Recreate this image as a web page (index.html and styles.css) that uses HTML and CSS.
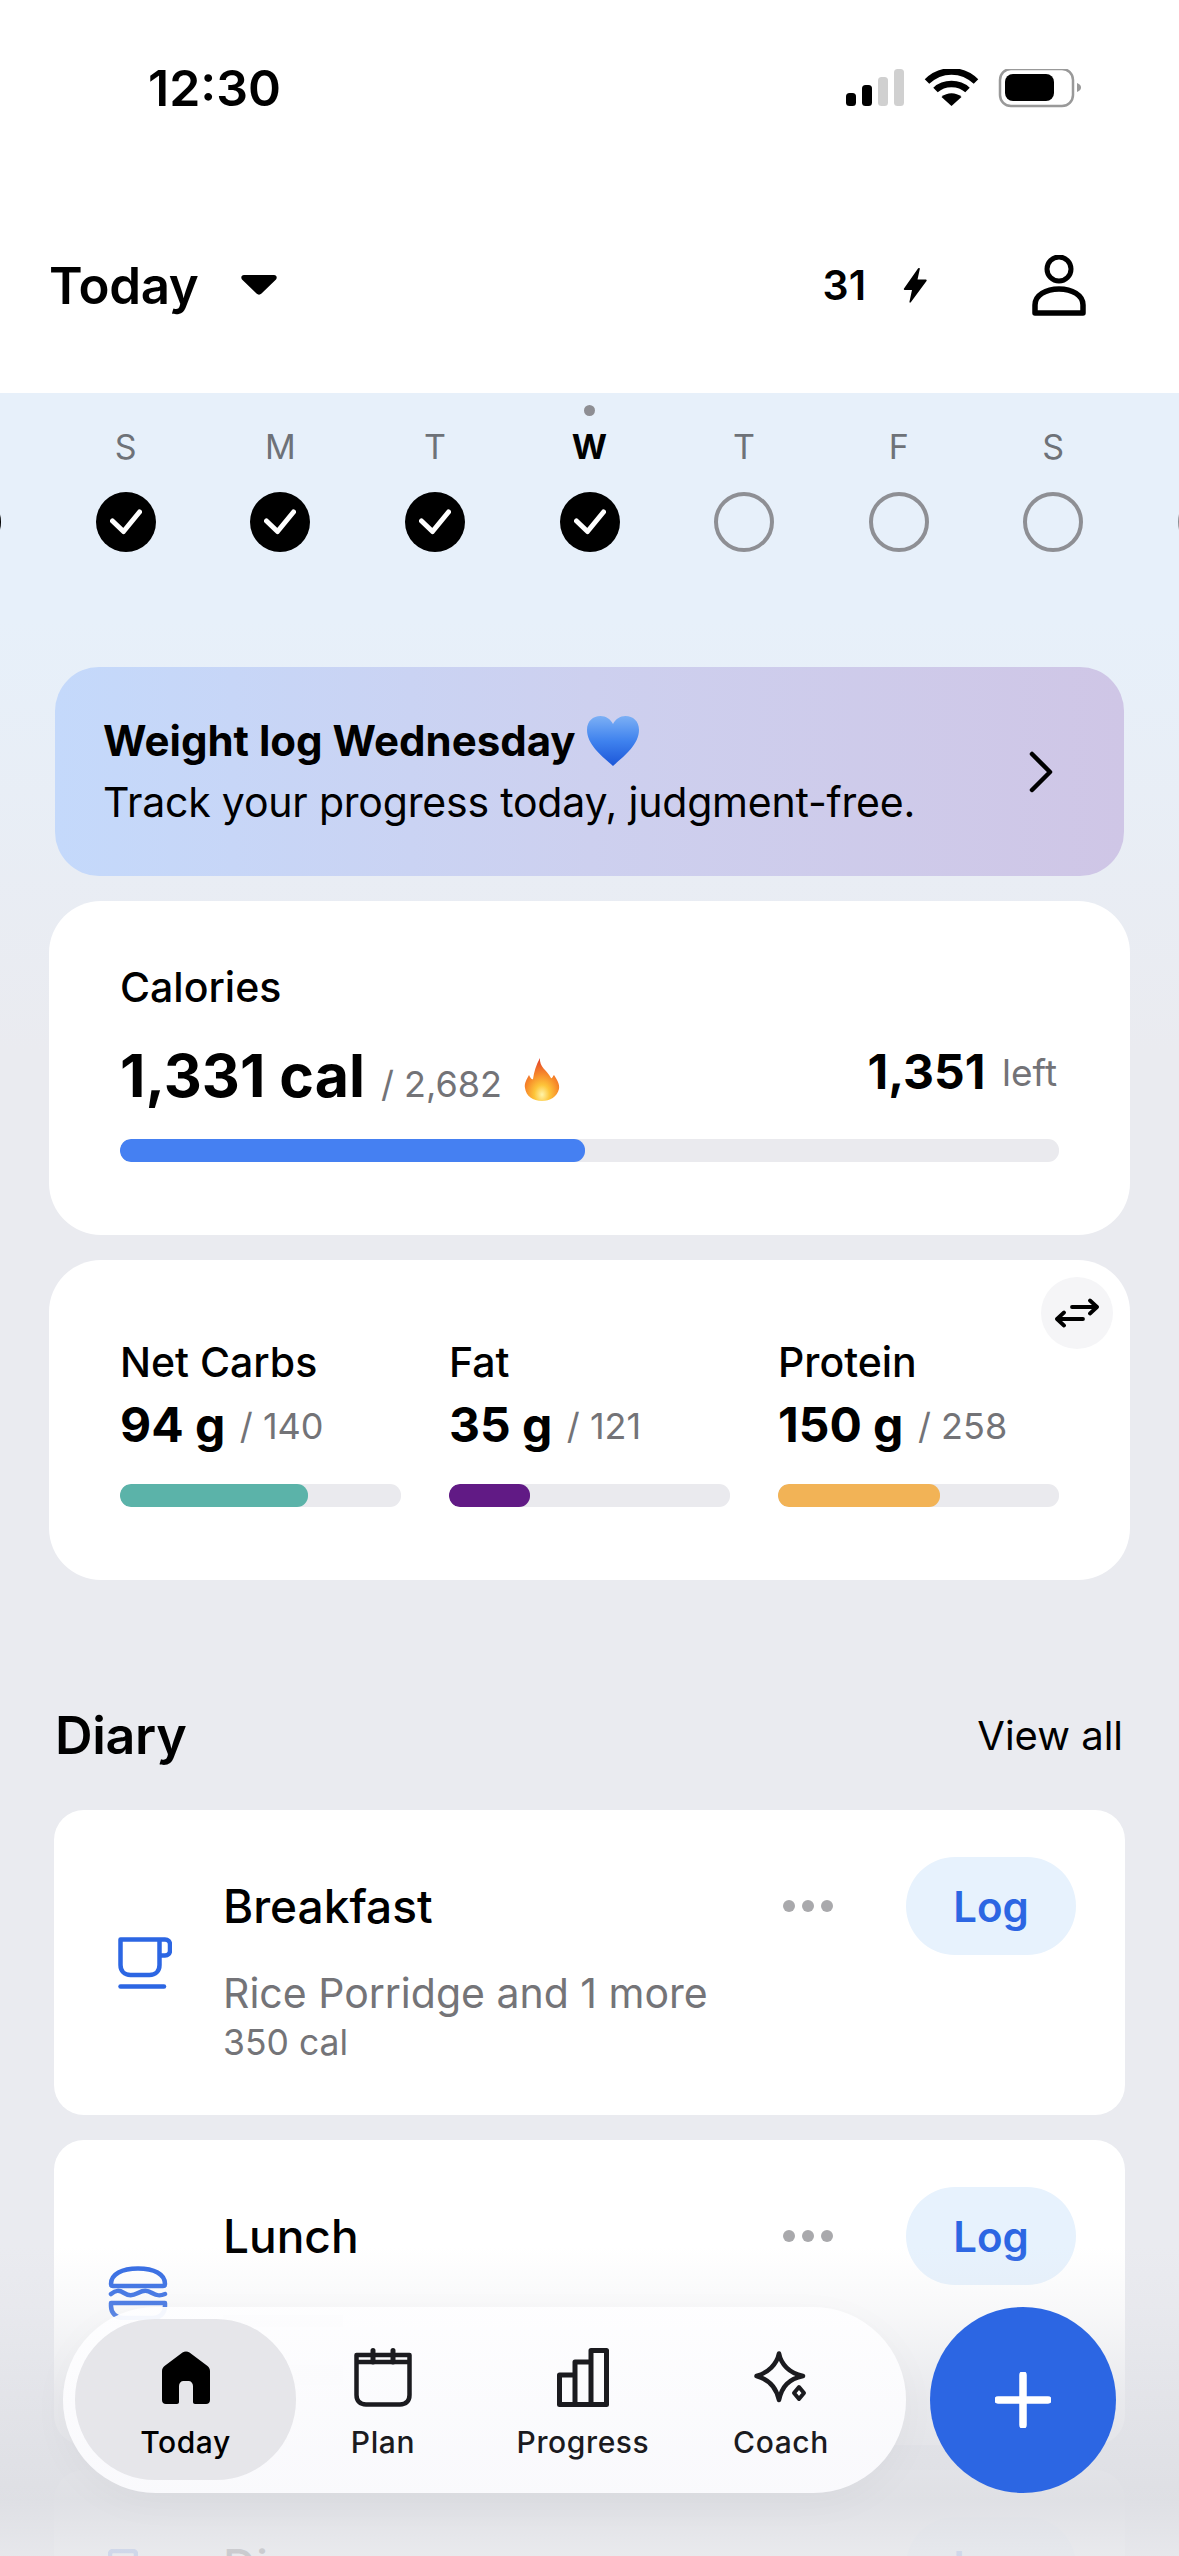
FILE: index.html
```html
<!DOCTYPE html>
<html lang="en">

<head>
    <meta charset="UTF-8">
    <title>Today</title>
    <link rel="stylesheet" href="styles.css">
</head>

<body>
    <div class="phone">
        <div class="top">
            <div class="status-bar">
                <span class="time">12:30</span>
                <svg class="status-icons" width="235" height="40" viewBox="0 0 235 40">
                    <rect x="0" y="24" width="10" height="13" rx="3.5" fill="#000" />
                    <rect x="16" y="16" width="10" height="21" rx="3.5" fill="#000" />
                    <rect x="32" y="8" width="10" height="29" rx="3.5" fill="#d0d0d0" />
                    <rect x="48" y="0" width="10" height="37" rx="3.5" fill="#d0d0d0" />
                    <path d="M81 12.500C95 -1 116 -1 130 12.500" fill="none" stroke="#000" stroke-width="6.500" />
                    <path d="M89.500 21C98 13 113 13 121.500 21" fill="none" stroke="#000" stroke-width="6.500" />
                    <path d="M105.500 37L95.500 28C101 23 110 23 115.500 28Z" fill="#000" />
                    <rect x="154" y="0" width="73" height="37" rx="11" fill="none" stroke="#999" stroke-width="2.500" />
                    <rect x="159" y="5" width="49" height="27" rx="8" fill="#000" />
                    <path d="M231 14C234 15 235 17 235 18.500C235 20 234 22 231 23Z" fill="#999" />
                </svg>
            </div>
            <div class="top-bar">
                <div class="date-picker">
                    <span class="date-label">Today</span>
                    <svg width="36" height="20" viewBox="0 0 36 20">
                        <path d="M3 0H33C35.500 0 36.500 2.500 35 4.500L20.500 18.500C19 20 17 20 15.500 18.500L1 4.500C-0.500 2.500 0.500 0 3 0Z" fill="#000" />
                    </svg>
                </div>
                <div class="streak">
                    <span class="streak-count">31</span>
                    <svg width="24" height="35" viewBox="0 0 24 35">
                        <path d="M15 0.500L1 20.500C0.500 21.500 1 22 2 22H9L6.500 33.500C6.300 35 7.300 35 8 34L23.500 13C24 12 23.500 11.500 22.500 11.500H14.500L16.800 1C17 0 15.800 -0.500 15 0.500Z" fill="#000" />
                    </svg>
                </div>
                <svg class="profile" width="54" height="61" viewBox="0 0 54 61">
                    <circle cx="27" cy="14" r="12" fill="none" stroke="#000" stroke-width="5" />
                    <path d="M3 58V50C3 40 14 34 27 34C40 34 51 40 51 50V58Z" fill="none" stroke="#000" stroke-width="5.500" stroke-linejoin="round" />
                </svg>
            </div>
        </div>

        <div class="week">
            <div class="day"><span class="today-dot off"></span><span class="day-name">&nbsp;</span><span class="day-mark done"></span></div>
            <div class="day">
                <span class="today-dot off"></span><span class="day-name">S</span>
                <span class="day-mark done"><svg width="32" height="26" viewBox="0 0 32 26"><path d="M2.500 12L13.500 22.500L29.500 3" fill="none" stroke="#fff" stroke-width="5" stroke-linecap="round" stroke-linejoin="round" /></svg></span>
            </div>
            <div class="day">
                <span class="today-dot off"></span><span class="day-name">M</span>
                <span class="day-mark done"><svg width="32" height="26" viewBox="0 0 32 26"><path d="M2.500 12L13.500 22.500L29.500 3" fill="none" stroke="#fff" stroke-width="5" stroke-linecap="round" stroke-linejoin="round" /></svg></span>
            </div>
            <div class="day">
                <span class="today-dot off"></span><span class="day-name">T</span>
                <span class="day-mark done"><svg width="32" height="26" viewBox="0 0 32 26"><path d="M2.500 12L13.500 22.500L29.500 3" fill="none" stroke="#fff" stroke-width="5" stroke-linecap="round" stroke-linejoin="round" /></svg></span>
            </div>
            <div class="day">
                <span class="today-dot"></span><span class="day-name current">W</span>
                <span class="day-mark done"><svg width="32" height="26" viewBox="0 0 32 26"><path d="M2.500 12L13.500 22.500L29.500 3" fill="none" stroke="#fff" stroke-width="5" stroke-linecap="round" stroke-linejoin="round" /></svg></span>
            </div>
            <div class="day"><span class="today-dot off"></span><span class="day-name">T</span><span class="day-mark"></span></div>
            <div class="day"><span class="today-dot off"></span><span class="day-name">F</span><span class="day-mark"></span></div>
            <div class="day"><span class="today-dot off"></span><span class="day-name">S</span><span class="day-mark"></span></div>
            <div class="day"><span class="today-dot off"></span><span class="day-name">&nbsp;</span><span class="day-mark"></span></div>
        </div>

        <div class="banner">
            <div class="banner-text">
                <div class="banner-title">
                    Weight log Wednesday
                    <svg width="52" height="50" viewBox="0 0 52 50">
                        <defs>
                            <linearGradient id="heart-fill" x1="0" y1="0" x2="0" y2="1">
                                <stop offset="0" stop-color="#7cb0f5" />
                                <stop offset="0.5" stop-color="#3f82ee" />
                                <stop offset="1" stop-color="#1c56d8" />
                            </linearGradient>
                        </defs>
                        <path d="M26 50C16 41 0 29 0 14C0 5 6 0 13.500 0C19 0 23.500 3 26 8C28.500 3 33 0 38.500 0C46 0 52 5 52 14C52 29 36 41 26 50Z" fill="url(#heart-fill)" />
                    </svg>
                </div>
                <div class="banner-sub">Track your progress today, judgment-free.</div>
            </div>
            <svg class="banner-arrow" width="24" height="42" viewBox="0 0 24 42">
                <path d="M3 3L21 21L3 39" fill="none" stroke="#000" stroke-width="4.500" stroke-linecap="round" stroke-linejoin="round" />
            </svg>
        </div>

        <div class="card calories">
            <div class="card-label">Calories</div>
            <div class="calorie-row">
                <div class="calorie-used">
                    <span class="calorie-value">1,331 cal</span>
                    <span class="muted">/ 2,682</span>
                    <svg class="flame" width="36" height="44" viewBox="0 0 36 44">
                        <defs>
                            <radialGradient id="flame-fill" cx="0.5" cy="0.85" r="0.8">
                                <stop offset="0" stop-color="#fff4a8" />
                                <stop offset="0.28" stop-color="#fdc53a" />
                                <stop offset="0.6" stop-color="#f78a2a" />
                                <stop offset="1" stop-color="#e4482a" />
                            </radialGradient>
                        </defs>
                        <path d="M16 0C15 9 23 12 27 20C28 21 29 18 30 17C33 22 36 26 35 31C33 39 26 43 18 43C9 43 2 38 1 30C0 25 3 21 5 17C7 21 8 22 9 21C10 14 12 7 16 0Z" fill="url(#flame-fill)" />
                    </svg>
                </div>
                <div class="calorie-left"><span class="left-value">1,351</span> <span class="muted">left</span></div>
            </div>
            <div class="bar calorie-bar">
                <div class="bar-fill blue" style="width: 465px"></div>
            </div>
        </div>

        <div class="card macros">
            <button class="swap-button">
                <svg width="44" height="32" viewBox="0 0 44 32">
                    <path d="M17 10H42M35 3.500L42 10L35 16.500M28 22H2M9 15.500L2 22L9 28.500" fill="none" stroke="#000" stroke-width="3.800" stroke-linecap="round" stroke-linejoin="round" />
                </svg>
            </button>
            <div class="macro">
                <div class="card-label">Net Carbs</div>
                <div class="macro-value"><span class="left-value">94 g</span> <span class="muted">/ 140</span></div>
                <div class="bar"><div class="bar-fill teal" style="width: 188px"></div></div>
            </div>
            <div class="macro">
                <div class="card-label">Fat</div>
                <div class="macro-value"><span class="left-value">35 g</span> <span class="muted">/ 121</span></div>
                <div class="bar"><div class="bar-fill purple" style="width: 81px"></div></div>
            </div>
            <div class="macro">
                <div class="card-label">Protein</div>
                <div class="macro-value"><span class="left-value">150 g</span> <span class="muted">/ 258</span></div>
                <div class="bar"><div class="bar-fill orange" style="width: 162px"></div></div>
            </div>
        </div>

        <div class="diary-head">
            <h2>Diary</h2>
            <span class="view-all">View all</span>
        </div>

        <div class="meal">
            <div class="meal-icon">
                <svg class="cup" width="54" height="52" viewBox="0 0 54 52">
                    <path d="M2.500 2.500H41.500V28C41.500 34 37.500 38 31.500 38H12.500C6.500 38 2.500 34 2.500 28ZM41.500 2.500H47C50 2.500 52 4.500 52 7.500V13.500C52 16.500 50 18.500 47 18.500H41.500" fill="none" stroke="#2c66e3" stroke-width="4.500" stroke-linejoin="round" />
                    <path d="M2.500 49.500H46" fill="none" stroke="#2c66e3" stroke-width="4.500" stroke-linecap="round" />
                </svg>
            </div>
            <div class="meal-body">
                <div class="meal-head">
                    <span class="meal-name">Breakfast</span>
                    <span class="meal-more"><i></i><i></i><i></i></span>
                    <button class="log-button">Log</button>
                </div>
                <div class="meal-items">Rice Porridge and 1 more</div>
                <div class="meal-cal">350 cal</div>
            </div>
        </div>

        <div class="meal">
            <div class="meal-icon">
                <svg width="60" height="54" viewBox="0 0 60 54">
                    <path d="M3 18C3 8 14 2.500 30 2.500C46 2.500 57 8 57 18C57 19.500 56 20 55 20H5C4 20 3 19.500 3 18Z" fill="none" stroke="#2c66e3" stroke-width="4.500" />
                    <path d="M3 28C8 24 11 24 16 27C21 30 24 30 30 27C36 24 39 24 44 27C49 30 52 30 57 28" fill="none" stroke="#2c66e3" stroke-width="4.500" stroke-linecap="round" />
                    <path d="M3 37H57V40C57 47 52 52 45 52H15C8 52 3 47 3 40Z" fill="none" stroke="#2c66e3" stroke-width="4.500" stroke-linejoin="round" />
                </svg>
            </div>
            <div class="meal-body">
                <div class="meal-head">
                    <span class="meal-name">Lunch</span>
                    <span class="meal-more"><i></i><i></i><i></i></span>
                    <button class="log-button">Log</button>
                </div>
                <div class="meal-ghost"></div>
                <div class="meal-ghost short"></div>
            </div>
        </div>

        <div class="meal dinner">
            <div class="meal-icon">
                <svg width="30" height="52" viewBox="0 0 30 52">
                    <rect x="2" y="2" width="26" height="48" rx="3" fill="none" stroke="#2c66e3" stroke-width="4.500" />
                </svg>
            </div>
            <div class="meal-body">
                <div class="meal-head">
                    <span class="meal-name">Dinner</span>
                    <span class="meal-more"><i></i><i></i><i></i></span>
                    <button class="log-button">Log</button>
                </div>
            </div>
        </div>

        <div class="bottom-fade"></div>

        <nav class="tab-bar">
            <div class="tab active">
                <svg width="48" height="53" viewBox="0 0 48 53">
                    <path d="M20.500 1.500C22.500 0 25.500 0 27.500 1.500L45.500 15C47 16.200 48 18 48 20V49C48 51.500 46.500 53 44 53H33C31.800 53 31 52.200 31 51V35C31 32 29 30 26.500 30H21.500C19 30 17 32 17 35V51C17 52.200 16.200 53 15 53H4C1.500 53 0 51.500 0 49V20C0 18 1 16.200 2.500 15Z" fill="#000" />
                </svg>
                <span>Today</span>
            </div>
            <div class="tab plan">
                <svg width="58" height="59" viewBox="0 0 58 59">
                    <path d="M2.500 7H55.500V47C55.500 53 52 56.500 46 56.500H12C6 56.500 2.500 53 2.500 47ZM2.500 14H55.500" fill="none" stroke="#1b1b1f" stroke-width="4.500" stroke-linejoin="round" />
                    <path d="M19 2.500V14M39 2.500V14" fill="none" stroke="#1b1b1f" stroke-width="5" stroke-linecap="round" />
                </svg>
                <span>Plan</span>
            </div>
            <div class="tab progress">
                <svg width="52" height="59" viewBox="0 0 52 59">
                    <path d="M2.500 27H18V56.500H2.500ZM18 14H34V56.500H18ZM34 2.500H49.500V56.500H34Z" fill="none" stroke="#1b1b1f" stroke-width="5" stroke-linejoin="round" />
                </svg>
                <span>Progress</span>
            </div>
            <div class="tab coach">
                <svg width="54" height="54" viewBox="0 0 54 54">
                    <path d="M25 3.500C27 14 35 23 49 26C35 29 28 36 25 50C22 36 14 29 2.500 26C14 23 23 14 25 3.500Z" fill="none" stroke="#1b1b1f" stroke-width="4.500" stroke-linejoin="round" />
                    <path d="M45 37L50 43L45 49L40 43Z" fill="#fff" stroke="#1b1b1f" stroke-width="4" stroke-linejoin="round" />
                </svg>
                <span>Coach</span>
            </div>
        </nav>

        <button class="add-button">
            <svg width="56" height="56" viewBox="0 0 56 56">
                <path d="M28 3V53M3 28H53" fill="none" stroke="#fff" stroke-width="7.500" stroke-linecap="round" />
            </svg>
        </button>
    </div>
</body>

</html>
```

FILE: styles.css
```css
* {
    box-sizing: border-box;
}

body {
    margin: 0;
    background-color: #eaebef;
    font-family: "Inter", "Liberation Sans", sans-serif;
    color: #000;
}

.phone {
    position: relative;
    width: 1179px;
    height: 2556px;
    overflow: hidden;
    background: linear-gradient(180deg, #e7f0fa 0, #e7f0fa 620px, #eaebf0 1050px);
}

/* status bar + header */
.top {
    height: 393px;
    background-color: #fff;
}

.status-bar {
    display: flex;
    align-items: center;
    justify-content: space-between;
    height: 174px;
    padding: 2px 98px 0 148px;
}

.time {
    font-size: 50px;
    font-weight: 600;
}

.status-icons {
    margin-top: 2px;
}

.top-bar {
    display: flex;
    align-items: center;
    height: 219px;
    padding: 3px 93px 0 49px;
}

.date-picker {
    display: flex;
    align-items: center;
    gap: 42px;
    flex: 1;
}

.date-label {
    font-size: 51px;
    font-weight: 600;
    letter-spacing: -0.3px;
}

.streak {
    display: flex;
    align-items: center;
    gap: 37px;
    margin-right: 105px;
}

.streak-count {
    font-size: 41px;
    font-weight: 600;
}

/* week strip */
.week {
    display: flex;
    justify-content: center;
    overflow: hidden;
    padding-top: 12px;
}

.day {
    display: flex;
    flex: 0 0 154.6px;
    flex-direction: column;
    align-items: center;
}

.today-dot {
    width: 11px;
    height: 11px;
    border-radius: 50%;
    background-color: #8e8e93;
}

.today-dot.off {
    visibility: hidden;
}

.day-name {
    height: 44px;
    margin-top: 9px;
    font-size: 34px;
    line-height: 44px;
    color: #6e7278;
}

.day-name.current {
    font-weight: 700;
    color: #000;
}

.day-mark {
    display: flex;
    align-items: center;
    justify-content: center;
    width: 60px;
    height: 60px;
    margin-top: 23px;
    border: 4.5px solid #8e8f94;
    border-radius: 50%;
}

.day-mark.done {
    background-color: #000;
    border: none;
}

/* banner */
.banner {
    display: flex;
    align-items: center;
    justify-content: space-between;
    height: 209px;
    margin: 115px 55px 0;
    padding: 0 71px 6px 48px;
    border-radius: 44px;
    background: linear-gradient(90deg, #c4d9fb 0%, #cdd0ef 50%, #cfc6e6 100%);
}

.banner-arrow {
    margin-top: 6px;
}

.banner-title {
    display: flex;
    align-items: center;
    gap: 11px;
    height: 60px;
    font-size: 42px;
    font-weight: 700;
}

.banner-sub {
    margin-top: 6px;
    font-size: 41px;
    letter-spacing: -0.2px;
}

/* cards */
.card {
    position: relative;
    margin: 25px 49px 0;
    border-radius: 52px;
    background-color: #fff;
    padding: 0 71px;
}

.card-label {
    height: 52px;
    font-size: 41px;
    font-weight: 500;
    line-height: 52px;
}

.muted {
    font-size: 36px;
    font-weight: 400;
    color: #737377;
}

.calories {
    height: 334px;
    padding-top: 60px;
}

.calorie-row {
    display: flex;
    align-items: flex-start;
    justify-content: space-between;
    height: 70px;
    margin-top: 28px;
}

.calorie-used {
    display: flex;
    align-items: baseline;
    gap: 16px;
    line-height: 70px;
}

.calorie-value {
    font-size: 59px;
    font-weight: 700;
}

.flame {
    align-self: center;
    margin-left: 6px;
}

.calorie-left {
    margin-right: 2px;
    line-height: 61px;
}

.calorie-left .muted {
    margin-left: 12px;
    font-size: 37px;
    vertical-align: 3px;
}

.left-value {
    font-size: 48px;
    font-weight: 700;
}

.bar {
    height: 23px;
    border-radius: 11px;
    background-color: #eaeaee;
    overflow: hidden;
}

.calorie-bar {
    margin-top: 28px;
}

.bar-fill {
    height: 100%;
    border-radius: 11px;
}

.blue {
    background-color: #4580f2;
}

.teal {
    background-color: #5bb3a9;
}

.purple {
    background-color: #611a85;
}

.orange {
    background-color: #f2b356;
}

.macros {
    display: grid;
    grid-template-columns: repeat(3, 1fr);
    column-gap: 48px;
    height: 320px;
    padding-top: 76px;
}

.macro-value {
    height: 56px;
    margin-top: 9px;
    line-height: 56px;
}

.macro-value .muted {
    margin-left: 10px;
    vertical-align: 3px;
}

.macro .bar {
    margin-top: 31px;
}

.swap-button {
    position: absolute;
    top: 17px;
    right: 17px;
    display: flex;
    align-items: center;
    justify-content: center;
    width: 72px;
    height: 72px;
    padding: 0;
    border: none;
    border-radius: 50%;
    background-color: #f5f5f7;
}

/* diary */
.diary-head {
    display: flex;
    align-items: center;
    justify-content: space-between;
    height: 60px;
    margin: 125px 56px 0 55px;
}

.diary-head h2 {
    margin: 0;
    font-size: 52px;
    font-weight: 600;
    letter-spacing: -0.3px;
}

.view-all {
    font-size: 40px;
}

.meal {
    display: flex;
    align-items: center;
    height: 305px;
    margin: 25px 54px 0;
    border-radius: 30px;
    background-color: #fff;
}

.diary-head + .meal {
    margin-top: 45px;
}

.meal.dinner {
    height: 210px;
}

.meal-icon {
    display: flex;
    flex: 0 0 169px;
    padding-left: 54px;
}

.meal-icon .cup {
    margin-left: 10px;
}

.meal-body {
    align-self: flex-start;
    flex: 1;
    padding: 47px 49px 0 0;
}

.meal-head {
    display: flex;
    align-items: center;
    height: 98px;
}

.meal-name {
    flex: 1;
    font-size: 46px;
    font-weight: 500;
}

.meal-more {
    display: flex;
    gap: 7px;
    margin-right: 73px;
}

.meal-more i {
    width: 12px;
    height: 12px;
    border-radius: 50%;
    background-color: #a9a9ac;
}

.log-button {
    width: 170px;
    height: 98px;
    padding: 0;
    border: none;
    border-radius: 49px;
    background-color: #e7f2fd;
    font-family: inherit;
    font-size: 42px;
    font-weight: 600;
    color: #2c66e3;
}

.meal-items {
    margin-top: 13px;
    font-size: 41px;
    color: #747478;
}

.meal-cal {
    margin-top: 3px;
    font-size: 35.5px;
    color: #747478;
}

/* blurred text under the tab bar */
.meal-ghost {
    width: 120px;
    height: 12px;
    margin-top: 30px;
    background-color: #e4e4e8;
}

.meal-ghost.short {
    height: 20px;
    margin-top: 38px;
}

.bottom-fade {
    position: absolute;
    left: 0;
    right: 0;
    bottom: 0;
    height: 336px;
    background: linear-gradient(180deg, rgba(224, 225, 230, 0) 8%, rgba(224, 225, 230, 0.22) 26%, rgba(224, 225, 230, 0.72) 53%, rgba(222, 223, 228, 0.97) 83%, rgba(230, 231, 235, 0.88) 100%);
}

/* bottom tabs */
.tab-bar {
    position: absolute;
    left: 63px;
    top: 2307px;
    display: flex;
    width: 843px;
    height: 186px;
    padding: 12px;
    border-radius: 93px;
    background: linear-gradient(180deg, rgba(254, 254, 255, 0.94), rgba(250, 250, 253, 0.97));
    box-shadow: 0 10px 40px rgba(0, 0, 0, 0.03);
}

.tab {
    display: flex;
    flex-direction: column;
    align-items: center;
    justify-content: flex-end;
    height: 161px;
    padding-bottom: 20px;
    font-size: 30px;
    font-weight: 500;
    letter-spacing: 0.6px;
    color: #1b1b1f;
}

.tab svg {
    margin-bottom: 20px;
}

.tab.active {
    width: 221px;
    border-radius: 80px;
    background-color: #e6e6ea;
    color: #000;
}

.tab.plan {
    width: 150px;
    margin-left: 12px;
}

.tab.plan svg,
.tab.progress svg {
    margin-bottom: 17px;
}

.tab.progress {
    width: 250px;
}

.tab.coach {
    width: 146px;
}

.add-button {
    position: absolute;
    left: 930px;
    top: 2307px;
    display: flex;
    align-items: center;
    justify-content: center;
    width: 186px;
    height: 186px;
    padding: 0;
    border: none;
    border-radius: 50%;
    background-color: #2c66e3;
}
```
